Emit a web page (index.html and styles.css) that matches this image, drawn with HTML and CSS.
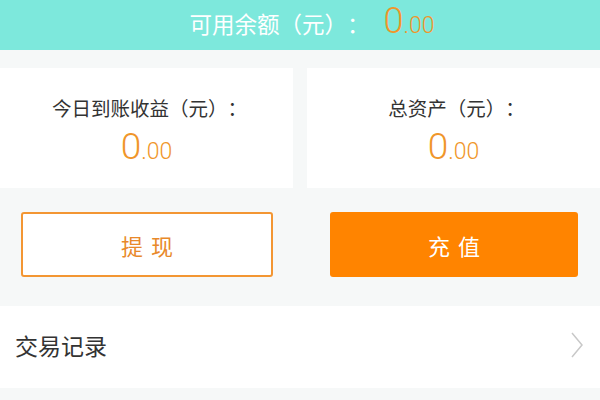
FILE: index.html
```html
<!DOCTYPE html>
<html lang="zh">
<head>
<meta charset="utf-8">
<link rel="stylesheet" href="styles.css">
</head>
<body>
<div class="page">
  <header class="balance">
    <span class="balance-label">可用余额（元）：</span><span class="amount"><span class="int">0</span><span class="dec">.00</span></span>
  </header>
  <section class="cards">
    <div class="card">
      <div class="card-label">今日到账收益（元）：</div>
      <div class="amount card-amount"><span class="int">0</span><span class="dec">.00</span></div>
    </div>
    <div class="card">
      <div class="card-label">总资产（元）：</div>
      <div class="amount card-amount"><span class="int">0</span><span class="dec">.00</span></div>
    </div>
  </section>
  <section class="actions">
    <button class="btn btn-outline">提现</button>
    <button class="btn btn-solid">充值</button>
  </section>
  <section class="list">
    <div class="list-row">
      <span class="list-text">交易记录</span>
      <svg class="chevron" width="14" height="26" viewBox="0 0 14 26"><path d="M2 1 L12 13 L2 25" fill="none" stroke="#c8c8c8" stroke-width="1.5"/></svg>
    </div>
  </section>
</div>
</body>
</html>
```

FILE: styles.css
```css
* { box-sizing: border-box; }
html, body { margin: 0; padding: 0; }
body {
  width: 600px;
  height: 400px;
  overflow: hidden;
  background: #f6f8f8;
  font-family: "Noto Sans CJK SC", "Noto Sans", sans-serif;
  color: #333;
  text-spacing-trim: space-all;
}
.balance {
  height: 50px;
  background: #7de8dc;
  display: flex;
  align-items: baseline;
  justify-content: center;
  padding-top: 3px;
  padding-left: 24px;
  line-height: 36px;
}
.balance-label {
  font-size: 22.5px;
  color: #ffffff;
}
.amount {
  font-family: Roboto, "Liberation Sans", sans-serif;
  font-weight: 300;
  color: #f0962a;
}
.balance .int { font-size: 36px; margin-left: 14px; }
.balance .dec { font-size: 23px; }
.cards {
  display: flex;
  gap: 14px;
  margin-top: 18px;
}
.card {
  flex: 1;
  height: 120px;
  background: #fff;
  display: flex;
  flex-direction: column;
  align-items: center;
  padding-top: 26px;
}
.card-label {
  font-size: 19.5px;
  line-height: 28px;
  color: #333;
  padding-left: 6px;
}
.card-amount {
  line-height: 40px;
  margin-top: 5px;
}
.card-amount .int { font-size: 37px; }
.card-amount .dec { font-size: 23px; }
.actions {
  display: flex;
  gap: 57px;
  padding: 0 22px 0 21px;
  margin-top: 24px;
}
.btn {
  flex: 1;
  height: 65px;
  border-radius: 3px;
  font-family: "Noto Sans CJK SC", sans-serif;
  font-size: 22px;
  letter-spacing: 8px;
  text-indent: 8px;
  padding: 0;
}
.btn-outline {
  background: #fff;
  border: 2px solid #f39633;
  color: #e8892a;
}
.btn-solid {
  background: #ff8400;
  border: none;
  color: #fff;
}
.list {
  margin-top: 29px;
  background: #fff;
}
.list-row {
  height: 82px;
  display: flex;
  align-items: center;
  justify-content: space-between;
  padding: 0 16px 4px 15px;
}
.list-text {
  font-size: 23px;
  color: #333;
}
.chevron { display: block; }
```
